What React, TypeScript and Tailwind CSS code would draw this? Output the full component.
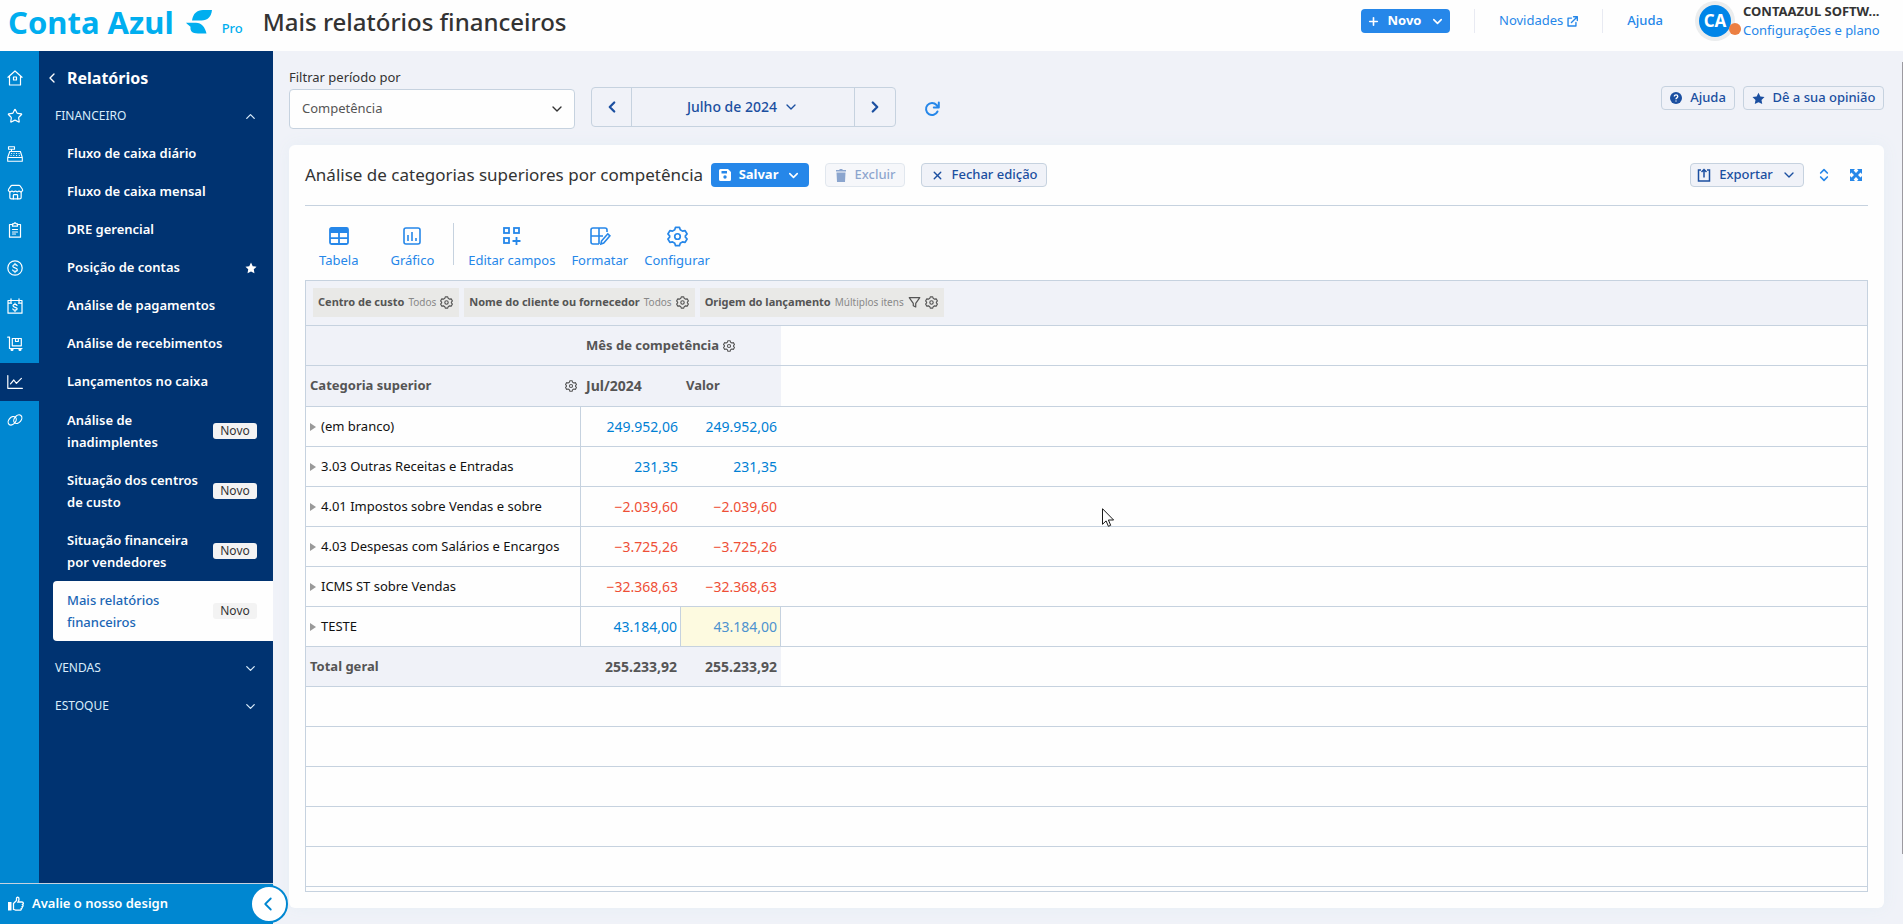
import type { ReactNode } from "react";
import {
  ChevronDown,
  ChevronLeft,
  ChevronRight,
  ChevronUp,
  ChevronsUpDown,
  Plus,
  Star,
  Store,
  X,
} from "lucide-react";

const reports = [
  { label: "Fluxo de caixa diário" },
  { label: "Fluxo de caixa mensal" },
  { label: "DRE gerencial" },
  { label: "Posição de contas", starred: true },
  { label: "Análise de pagamentos" },
  { label: "Análise de recebimentos" },
  { label: "Lançamentos no caixa" },
];

const newReports = [
  { label: "Análise de inadimplentes" },
  { label: "Situação dos centros de custo" },
  { label: "Situação financeira por vendedores" },
  { label: "Mais relatórios financeiros", active: true },
];

const rows = [
  { name: "(em branco)", value: "249.952,06" },
  { name: "3.03 Outras Receitas e Entradas", value: "231,35" },
  { name: "4.01 Impostos sobre Vendas e sobre", value: "−2.039,60" },
  { name: "4.03 Despesas com Salários e Encargos", value: "−3.725,26" },
  { name: "ICMS ST sobre Vendas", value: "−32.368,63" },
  { name: "TESTE", value: "43.184,00", highlight: true },
];

const filters = [
  { name: "Centro de custo", value: "Todos" },
  { name: "Nome do cliente ou fornecedor", value: "Todos" },
  { name: "Origem do lançamento", value: "Múltiplos itens", filtered: true },
];

function Line({ children, size = 16, width = 1.2 }: { children: ReactNode; size?: number; width?: number }) {
  return (
    <svg
      width={size}
      height={size}
      viewBox="0 0 16 16"
      fill="none"
      stroke="currentColor"
      strokeWidth={width}
      strokeLinecap="round"
      strokeLinejoin="round"
      aria-hidden="true"
      className="shrink-0"
    >
      {children}
    </svg>
  );
}

function Gear({ size = 14, width = 1.2 }: { size?: number; width?: number }) {
  return (
    <Line size={size} width={width}>
      <path d="M6.500 1h3l.6 1.900 1.700 1 2-.4 1.500 2.600L14 7.500v1l1.300 1.400-1.500 2.600-2-.4-1.700 1-.6 1.900h-3l-.6-1.900-1.700-1-2 .4L.700 9.900 2 8.500v-1L.700 6.100l1.500-2.600 2 .4 1.700-1z" />
      <circle cx="8" cy="8" r="2.1" />
    </Line>
  );
}

function StarSolid({ size }: { size: number }) {
  return (
    <svg width={size} height={size} viewBox="0 0 16 16" fill="currentColor" aria-hidden="true">
      <path d="M8 .8 10.3 5.5l5.1.7-3.7 3.6.9 5.1L8 12.5l-4.6 2.4.9-5.1L.6 6.2l5.1-.7z" />
    </svg>
  );
}

const modules = [
  {
    label: "Início",
    icon: (
      <Line>
        <path d="M1 7.3 8 1l7 6.3M2.5 6.2V15h11V6.2M6.5 7h3v3h-3z" />
      </Line>
    ),
  },
  { label: "Favoritos", icon: <Star size={16} strokeWidth={1.8} /> },
  {
    label: "Caixa",
    icon: (
      <Line width={1.1}>
        <path d="M1.5.8h6v2.4h-6zM4.5 3.2v2.3M2.8 5.5h10.6l1.9 6H.7zM.7 11.5v3.7h14.6v-3.7" />
        <path d="M4.5 7.5h.1M7 7.5h.1M9.5 7.5h.1M12 7.5h.1M4 9.5h.1M6.7 9.5h.1M9.5 9.5h.1M12.3 9.5h.1" />
      </Line>
    ),
  },
  { label: "Compras", icon: <Store size={17} strokeWidth={1.7} /> },
  {
    label: "Cadastros",
    icon: (
      <Line>
        <path d="M5 2.5H2.5v12.7h11V2.5H11M5.5 1.8h1.2L8 .7l1.3 1.1h1.2v2.4h-5zM5.5 7.5h5M5.5 10h5M5.5 12h3" />
      </Line>
    ),
  },
  {
    label: "Financeiro",
    icon: (
      <Line>
        <circle cx="8" cy="8" r="7.2" />
        <path d="M10.2 5.8C9.8 4.9 9 4.7 8 4.7c-1.3 0-2.2.6-2.2 1.6C5.8 8.6 10.3 7.2 10.3 9.7c0 1-1 1.6-2.3 1.6-1.1 0-2-.4-2.4-1.3M8 3.4v1.2M8 11.4v1.2" />
      </Line>
    ),
  },
  {
    label: "Pagamentos",
    icon: (
      <Line>
        <path d="M1 2.5h14v12.7H1zM4 .8v3.4M12 .8v3.4M1 5.2h3.5M11.5 5.2H15" />
        <path d="M10 7.5C9.7 6.7 9 6.4 8 6.4c-1.2 0-2 .6-2 1.4 0 2 4.2 1 4.2 3 0 .9-.9 1.4-2.1 1.4-1.1 0-1.9-.4-2.3-1.2M8 5.2v1M8 12.4v1" />
      </Line>
    ),
  },
  {
    label: "Estoque",
    icon: (
      <Line>
        <path d="M.7 1.200h1.800v11.300H15M5.300 2.500h9v7.300h-9zM8.500 2.500v3h2.800v-3" />
        <circle cx="5" cy="13.500" r="1" fill="currentColor" />
        <circle cx="13" cy="13.500" r="1" fill="currentColor" />
      </Line>
    ),
  },
  {
    label: "Relatórios",
    active: true,
    icon: (
      <Line>
        <path d="M.8 1.500v12.800h14.600M3.500 9.800 6.800 6l2.600 3.300 5-5" />
      </Line>
    ),
  },
  {
    label: "Integrações",
    icon: (
      <Line>
        <ellipse cx="5.2" cy="8.8" rx="4.8" ry="3.4" transform="rotate(-50 5.2 8.8)" />
        <ellipse cx="10.8" cy="7.2" rx="4.8" ry="3.4" transform="rotate(-50 10.8 7.2)" />
      </Line>
    ),
  },
];

const displayTools = [
  {
    label: "Tabela",
    icon: (
      <svg width="22" height="22" viewBox="0 0 22 22" fill="none" stroke="currentColor" strokeWidth="1.800" aria-hidden="true">
        <rect x="2" y="3" width="18" height="16" rx="1.5" />
        <path d="M2 13.2h18M11 7v12" />
        <path d="M2 4h18v4H2z" fill="currentColor" stroke="none" />
      </svg>
    ),
  },
  {
    label: "Gráfico",
    icon: (
      <svg width="22" height="22" viewBox="0 0 22 22" fill="none" stroke="currentColor" strokeWidth="1.6" aria-hidden="true">
        <rect x="3" y="3" width="16" height="16" rx="2" />
        <path d="M7 10v6M11 7v9M15 13v3" />
      </svg>
    ),
  },
];

const editTools = [
  {
    label: "Editar campos",
    icon: (
      <svg width="22" height="22" viewBox="0 0 22 22" fill="none" stroke="currentColor" strokeWidth="1.8" aria-hidden="true">
        <rect x="3" y="3" width="5" height="5" />
        <rect x="13" y="3" width="5" height="5" />
        <rect x="3" y="13" width="5" height="5" />
        <path d="M15.5 12v8M11.5 16h8" />
      </svg>
    ),
  },
  {
    label: "Formatar",
    icon: (
      <svg width="22" height="22" viewBox="0 0 22 22" fill="none" stroke="currentColor" strokeWidth="1.6" aria-hidden="true">
        <path d="M10 19H4a2 2 0 0 1-2-2V5a2 2 0 0 1 2-2h12a2 2 0 0 1 2 2v2M2 11h12M10 3v16" />
        <path d="m12.5 16 6.3-7.2 2.2 2-6.3 7.2-2.8 1z" />
      </svg>
    ),
  },
  { label: "Configurar", icon: <Gear size={21} width={1.3} /> },
];

function NewBadge() {
  return (
    <span className="flex h-4 w-11 shrink-0 items-center justify-center rounded-[3px] bg-[#f3f3f3] text-xs font-normal text-[#333]">
      Novo
    </span>
  );
}

function Tool({ label, icon }: { label: string; icon: ReactNode }) {
  return (
    <button type="button" className="flex flex-col items-center gap-[3px] text-[#2687e9]">
      <span className="flex h-[22px] items-center">{icon}</span>
      <span className="text-[13px] leading-5">{label}</span>
    </button>
  );
}

function Header() {
  return (
    <header className="flex h-[51px] shrink-0 items-start justify-between bg-[#fefefe] pr-[19px] pl-2">
      <div className="flex h-11 items-center">
        <a href="#" className="flex items-center text-[#00aeef]">
          <span className="text-[31px] leading-none font-bold">Conta Azul</span>
          <svg width="26" height="24" viewBox="0 0 26 24" fill="currentColor" className="ml-3" aria-hidden="true">
            <path d="M6 10.500C7 3.500 11 0 17 0h9c-.6 6.500-4.500 10.500-10.500 10.500z" />
            <path d="M0 12.800h10c5.500 0 9 4.500 10.500 10.700H12C6 23.500 4 21 4.500 16.800 3.500 16 1.500 14.500 0 12.800z" />
          </svg>
          <span className="mt-3 ml-2.5 text-[13px] leading-4 font-medium">Pro</span>
        </a>
        <h1 className="ml-5 text-2xl font-medium text-[#333]">Mais relatórios financeiros</h1>
      </div>
      <div className="flex h-[42px] items-center">
        <button
          type="button"
          className="flex h-6 w-[89px] items-center justify-center gap-2 rounded bg-[#2687e9] text-[13px] font-bold text-white"
        >
          <Plus size={13} strokeWidth={3} />
          Novo
          <ChevronDown size={15} strokeWidth={2.5} />
        </button>
        <span className="mr-6 ml-6 h-6 w-px bg-[#e8eaf2]" />
        <a href="#" className="flex items-center gap-1 text-[13px] text-[#2687e9]">
          Novidades
          <Line size={11} width={2}>
            <path d="M6.500 3H1.500v11.500H13V9.500M9.500 1H15v5.500M15 1 6.500 9.500" />
          </Line>
        </a>
        <span className="mr-6 ml-6 h-6 w-px bg-[#e8eaf2]" />
        <a href="#" className="text-[13px] font-medium text-[#2687e9]">
          Ajuda
        </a>
        <div className="relative ml-8 flex size-10 items-center justify-center rounded-full bg-[#ebedee]">
          <span className="flex size-8 items-center justify-center rounded-full bg-[#0085e8] text-[17px] font-bold text-white">
            CA
          </span>
          <span className="absolute -right-1.5 bottom-1.5 size-3 rounded-full bg-[#ec7f42]" />
        </div>
        <div className="ml-2 flex w-[141px] flex-col text-[13px] leading-[19px]">
          <span className="font-bold whitespace-nowrap text-[#333]">CONTAAZUL SOFTW...</span>
          <a href="#" className="whitespace-nowrap text-[#2687e9]">
            Configurações e plano
          </a>
        </div>
      </div>
    </header>
  );
}

function Sidebar() {
  return (
    <aside className="flex w-[273px] shrink-0 flex-col">
      <div className="flex flex-1">
        <nav aria-label="Módulos" className="w-[39px] bg-[#0087d1] pt-2 text-white">
          {modules.map((item) => (
            <a
              key={item.label}
              href="#"
              aria-label={item.label}
              className={`flex h-[38px] items-center pl-[7px] ${item.active ? "bg-[#003371]" : ""}`}
            >
              {item.icon}
            </a>
          ))}
        </nav>
        <nav aria-label="Relatórios" className="flex-1 bg-[#003371] pt-2 text-[13px] text-white">
          <a href="#" className="flex h-[38px] items-center gap-[7px] pl-[5px] text-base font-bold">
            <ChevronLeft size={16} />
            Relatórios
          </a>
          <button type="button" className="flex h-[38px] w-full items-center justify-between pr-[15px] pl-4 text-xs text-[#d9edfb]">
            FINANCEIRO
            <ChevronUp size={15} />
          </button>
          {reports.map((item) => (
            <a key={item.label} href="#" className="flex h-[38px] items-center justify-between pr-4 pl-7 font-semibold">
              {item.label}
              {item.starred && <StarSolid size={12} />}
            </a>
          ))}
          {newReports.map((item) => (
            <a
              key={item.label}
              href="#"
              className={`flex h-[60px] items-center justify-between pr-4 leading-[22px] ${
                item.active ? "ml-3.5 rounded-l bg-[#fefefe] pl-3.5 font-medium text-[#1a66b5]" : "pl-7 font-semibold"
              }`}
            >
              <span className="w-[138px]">{item.label}</span>
              <NewBadge />
            </a>
          ))}
          <button
            type="button"
            className="mt-2 flex h-[38px] w-full items-center justify-between pr-[15px] pl-4 text-xs text-[#d9edfb]"
          >
            VENDAS
            <ChevronDown size={15} />
          </button>
          <button type="button" className="flex h-[38px] w-full items-center justify-between pr-[15px] pl-4 text-xs text-[#d9edfb]">
            ESTOQUE
            <ChevronDown size={15} />
          </button>
        </nav>
      </div>
      <div className="relative flex h-[41px] items-center border-t border-[#c6d2df] bg-[#0087d1] pl-2 text-white">
        <a href="#" className="flex items-center gap-2 text-[13px] font-semibold">
          <svg width="16" height="16" viewBox="0 0 16 16" fill="none" stroke="currentColor" strokeWidth="1.3" aria-hidden="true">
            <path d="M0 6h3.500v8.500H0z" fill="currentColor" stroke="none" />
            <path d="M5.500 7.500 8.500 4.500V2.200c0-1.400 2.500-1.400 2.500.8 0 1.300-.5 2.200-1 3h4c1.700 0 1.700 2 .6 2.400.9.800.5 2-.5 2.300.5 1-.1 1.700-.9 2 .3 1-.3 1.500-1.200 1.500H8.500c-1.500 0-2-.8-3-.8z" />
          </svg>
          Avalie o nosso design
        </a>
        <button
          type="button"
          aria-label="Recolher menu"
          className="absolute -right-[15px] bottom-px flex size-[38px] items-center justify-center rounded-full border-2 border-[#0087d1] bg-white pr-0.5 text-[#0087d1]"
        >
          <ChevronLeft size={22} />
        </button>
      </div>
    </aside>
  );
}

const outlineButton =
  "flex h-6 items-center justify-center gap-2 rounded border border-[#c6d2df] bg-[#f0f2f8] text-[13px] font-medium text-[#1b4fa0]";

function PeriodBar() {
  return (
    <div className="flex items-start justify-between">
      <div className="flex items-end">
        <div className="flex flex-col">
          <label htmlFor="periodo" className="h-[23px] text-[13px] leading-[22px] text-[#333]">
            Filtrar período por
          </label>
          <div className="relative">
            <select
              id="periodo"
              className="h-10 w-[286px] appearance-none rounded border border-[#c6d2df] bg-[#fefefe] px-3 text-[13px] text-[#555]"
            >
              <option>Competência</option>
            </select>
            <ChevronDown size={16} className="pointer-events-none absolute top-3 right-2.5 text-[#333]" />
          </div>
        </div>
        <div className="mb-0.5 ml-4 flex h-10 w-[305px] divide-x divide-[#c6d2df] rounded border border-[#c6d2df] text-[#1b4fa0]">
          <button type="button" aria-label="Mês anterior" className="flex w-10 items-center justify-center">
            <ChevronLeft size={18} strokeWidth={3} />
          </button>
          <button type="button" className="flex flex-1 items-center justify-center gap-1.5 text-sm font-medium">
            Julho de 2024
            <ChevronDown size={16} />
          </button>
          <button type="button" aria-label="Próximo mês" className="flex w-10 items-center justify-center">
            <ChevronRight size={18} strokeWidth={3} />
          </button>
        </div>
        <button type="button" aria-label="Atualizar" className="mb-3 ml-7 text-[#2687e9]">
          <Line size={16} width={2}>
            <path d="M13.500 10.500A6 6 0 1 1 12.500 4l2 2M14.800 1.500v5H9.800" />
          </Line>
        </button>
      </div>
      <div className="mt-5 flex gap-2">
        <button type="button" className={`${outlineButton} w-[74px]`}>
          <svg width="12" height="12" viewBox="0 0 12 12" aria-hidden="true">
            <circle cx="6" cy="6" r="6" fill="currentColor" />
            <path d="M4.300 4.600c0-2.200 3.500-2.200 3.500 0C7.800 6 6 5.800 6 7.200M6 8.600v1" fill="none" stroke="#fff" strokeWidth="1.300" />
          </svg>
          Ajuda
        </button>
        <button type="button" className={`${outlineButton} w-[141px]`}>
          <StarSolid size={13} />
          Dê a sua opinião
        </button>
      </div>
    </div>
  );
}

function ReportHeader() {
  return (
    <div className="flex h-[61px] items-center justify-between border-b border-[#c6d2df]">
      <div className="flex items-center gap-4">
        <h2 className="-mr-2 text-[17px] whitespace-nowrap text-[#333]">Análise de categorias superiores por competência</h2>
        <button
          type="button"
          className="flex h-6 w-[98px] items-center justify-center gap-2 rounded bg-[#2687e9] text-[13px] font-bold text-white"
        >
          <svg width="12" height="12" viewBox="0 0 12 12" aria-hidden="true">
            <path d="M2 0h7l3 3v7.500a1.500 1.500 0 0 1-1.500 1.500h-9A1.500 1.500 0 0 1 0 10.500v-9A1.500 1.500 0 0 1 1.500 0z" fill="currentColor" />
            <path d="M2.500 2h5.500v2.500H2.500z" fill="#2687e9" />
            <circle cx="6" cy="8" r="1.700" fill="#2687e9" />
          </svg>
          Salvar
          <ChevronDown size={15} strokeWidth={2.5} />
        </button>
        <button type="button" disabled className={`${outlineButton} w-20 opacity-50`}>
          <svg width="12" height="13" viewBox="0 0 12 13" fill="currentColor" aria-hidden="true">
            <path d="M1 1h3.500V0h3v1H11v1.500H1zM1.500 3.500h9L10 13H2z" />
          </svg>
          Excluir
        </button>
        <button type="button" className={`${outlineButton} w-[126px]`}>
          <X size={13} strokeWidth={2.5} />
          Fechar edição
        </button>
      </div>
      <div className="flex items-center text-[#2687e9]">
        <button type="button" className={`${outlineButton} w-[114px]`}>
          <svg width="14" height="14" viewBox="0 0 14 14" fill="none" stroke="currentColor" strokeWidth="1.5" aria-hidden="true">
            <path d="M4 2H1.500v11h11V2H10M7 9.500V1.500M4.500 4 7 1.500 9.500 4" />
          </svg>
          Exportar
          <ChevronDown size={16} />
        </button>
        <button type="button" aria-label="Expandir linhas" className="ml-3">
          <ChevronsUpDown size={16} strokeWidth={2.5} />
        </button>
        <button type="button" aria-label="Tela cheia" className="mr-1.5 ml-[18px]">
          <svg width="12" height="12" viewBox="0 0 12 12" fill="currentColor" aria-hidden="true">
            <path d="M0 0h5L3.600 1.500 6 4l2.400-2.500L7 0h5v5l-1.500-1.400L8 6l2.500 2.400L12 7v5H7l1.400-1.500L6 8l-2.400 2.500L5 12H0V7l1.500 1.400L4 6 1.500 3.600 0 5z" />
          </svg>
        </button>
      </div>
    </div>
  );
}

function PivotTable() {
  return (
    <div className="border border-[#c6d2df] pb-1 text-[13px] text-[#555]">
      <div className="flex h-[45px] gap-[5px] border-b border-[#c6d2df] bg-[#f0f2f8] px-[7px] py-[7px]">
        {filters.map((filter) => (
          <button
            key={filter.name}
            type="button"
            className="flex h-[29px] items-center gap-1 bg-[#e9e9e7] pr-1.5 pl-[5px] text-[11px] font-bold"
          >
            {filter.name}
            <span className="text-[10px] font-normal text-[#888]">{filter.value}</span>
            {filter.filtered && (
              <Line size={13} width={1.5}>
                <path d="M1.500 2h13L9.500 9v4.500l-3-1.500V9z" />
              </Line>
            )}
            <Gear size={13} width={1.4} />
          </button>
        ))}
      </div>
      <table className="w-full table-fixed border-separate border-spacing-0 [&_td]:border-b [&_td]:border-[#c6d2df] [&_th]:border-b [&_th]:border-[#c6d2df]">
        <colgroup>
          <col className="w-[275px]" />
          <col className="w-[100px]" />
          <col className="w-[100px]" />
          <col />
        </colgroup>
        <thead>
          <tr className="h-10">
            <td className="bg-[#f0f2f8]" />
            <th colSpan={2} className="bg-[#f0f2f8] pl-[5px] text-left">
              <span className="flex items-center gap-1">
                Mês de competência
                <Gear size={12} width={1.4} />
              </span>
            </th>
            <td />
          </tr>
          <tr className="h-[41px] text-left">
            <th className="bg-[#f0f2f8] px-1">
              <span className="flex items-center justify-between">
                Categoria superior
                <Gear size={12} width={1.4} />
              </span>
            </th>
            <th className="bg-[#f0f2f8] pl-[5px] text-sm">Jul/2024</th>
            <th className="bg-[#f0f2f8] pl-[5px]">Valor</th>
            <td />
          </tr>
        </thead>
        <tbody>
          {rows.map((row) => {
            const color = row.value.startsWith("−") ? "text-[#ee4f36]" : "text-[#0080d4]";
            return (
              <tr key={row.name} className="h-10">
                <td className="border-r px-1 text-[#111]">
                  <span className="flex items-center gap-[5px] whitespace-nowrap">
                    <svg width="6" height="8" viewBox="0 0 6 8" fill="#999" className="shrink-0" aria-hidden="true">
                      <path d="M0 0 6 4 0 8z" />
                    </svg>
                    {row.name}
                  </span>
                </td>
                <td className={`pr-[3px] text-right text-sm ${row.highlight ? "border-r" : "pr-1"} ${color}`}>{row.value}</td>
                <td
                  className={`text-right text-sm ${
                    row.highlight ? "border-r bg-[#fdfae0] pr-[3px] text-[#4d92cf]" : `pr-1 ${color}`
                  }`}
                >
                  {row.value}
                </td>
                <td />
              </tr>
            );
          })}
          <tr className="h-10 font-bold">
            <th className="bg-[#f0f2f8] pl-1 text-left">Total geral</th>
            <td className="bg-[#f0f2f8] pr-1 text-right text-sm">255.233,92</td>
            <td className="bg-[#f0f2f8] pr-1 text-right text-sm">255.233,92</td>
            <td />
          </tr>
          {[1, 2, 3, 4, 5].map((n) => (
            <tr key={n} className="h-10">
              <td colSpan={4} />
            </tr>
          ))}
        </tbody>
      </table>
    </div>
  );
}

export default function App() {
  return (
    <div className="relative flex min-h-screen flex-col bg-[#f0f2f8] font-['Noto_Sans',sans-serif]">
      <Header />
      <div className="flex flex-1">
        <Sidebar />
        <main className="min-w-0 flex-1 px-4 pt-[15px] pr-[19px] pb-4">
          <PeriodBar />
          <section className="mt-4 rounded-md bg-[#fefefe] px-4 pb-4 shadow-[0_0_16px_#e6eef5]">
            <ReportHeader />
            <div className="flex h-[74px] items-start pt-[17px] pl-3.5">
              <div className="flex gap-8 pt-0.5">
                {displayTools.map((tool) => (
                  <Tool key={tool.label} {...tool} />
                ))}
              </div>
              <span className="mr-3.5 ml-[19px] h-[42px] w-px bg-[#c6d2df]" />
              <div className="flex gap-4 pt-0.5">
                {editTools.map((tool) => (
                  <Tool key={tool.label} {...tool} />
                ))}
              </div>
            </div>
            <PivotTable />
          </section>
        </main>
      </div>
      <div className="absolute top-[62px] right-0 h-[792px] w-px bg-[#9c9aa0]" />
      <svg width="13" height="20" viewBox="0 0 13 20" className="absolute top-[508px] left-[1102px]" aria-hidden="true">
        <path d="M.5.700v15.600l3.600-3.400 2.300 5.400 2.300-1-2.300-5.300h5.200z" fill="#fff" stroke="#1a1a1a" />
      </svg>
    </div>
  );
}
